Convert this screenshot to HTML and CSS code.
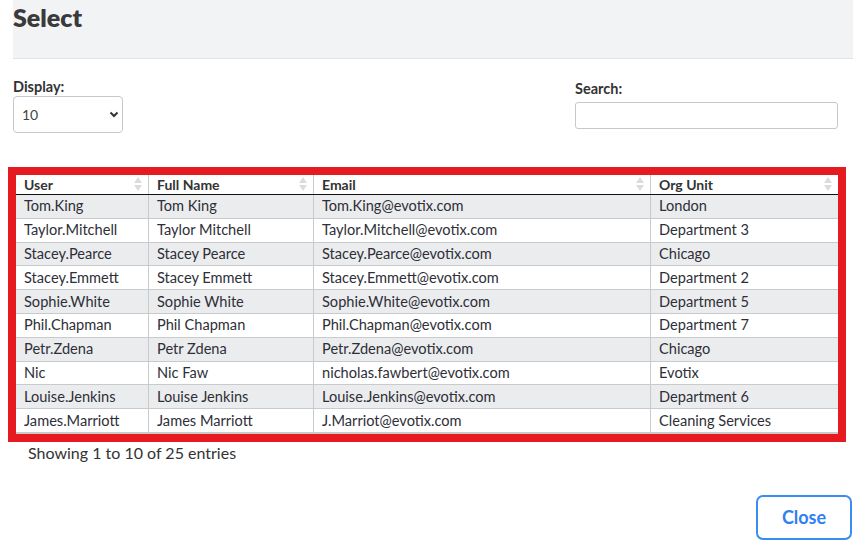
FILE: index.html
```html
<!DOCTYPE html>
<html lang="en">
<head>
    <meta charset="UTF-8">
    <meta name="viewport" content="width=device-width, initial-scale=1.0">
    <title>Select</title>
    <link rel="stylesheet" href="styles.css">
</head>
<body>

    <!-- Header -->
    <header class="modal-header">
        <h1>Select</h1>
    </header>

    <!-- Controls -->
    <section class="controls">
        <div class="display">
            <label for="display">Display:</label>
            <div class="select-wrap">
                <select id="display">
                    <option>10</option>
                    <option>25</option>
                    <option>50</option>
                </select>
                <svg class="chevron" width="10" height="7" viewBox="0 0 10 7">
                    <path d="M1.5 1.5 L5 5 L8.5 1.5" fill="none" stroke="#333" stroke-width="2"/>
                </svg>
            </div>
        </div>
        <div class="search">
            <label for="search">Search:</label>
            <input type="text" id="search">
        </div>
    </section>

    <!-- Users table -->
    <div class="table-frame">
        <table class="users">
            <thead>
                <tr>
                    <th class="col-user">User</th>
                    <th class="col-name">Full Name</th>
                    <th class="col-email">Email</th>
                    <th class="col-org">Org Unit</th>
                </tr>
            </thead>
            <tbody>
                <tr><td>Tom.King</td><td>Tom King</td><td>Tom.King@evotix.com</td><td>London</td></tr>
                <tr><td>Taylor.Mitchell</td><td>Taylor Mitchell</td><td>Taylor.Mitchell@evotix.com</td><td>Department 3</td></tr>
                <tr><td>Stacey.Pearce</td><td>Stacey Pearce</td><td>Stacey.Pearce@evotix.com</td><td>Chicago</td></tr>
                <tr><td>Stacey.Emmett</td><td>Stacey Emmett</td><td>Stacey.Emmett@evotix.com</td><td>Department 2</td></tr>
                <tr><td>Sophie.White</td><td>Sophie White</td><td>Sophie.White@evotix.com</td><td>Department 5</td></tr>
                <tr><td>Phil.Chapman</td><td>Phil Chapman</td><td>Phil.Chapman@evotix.com</td><td>Department 7</td></tr>
                <tr><td>Petr.Zdena</td><td>Petr Zdena</td><td>Petr.Zdena@evotix.com</td><td>Chicago</td></tr>
                <tr><td>Nic</td><td>Nic Faw</td><td>nicholas.fawbert@evotix.com</td><td>Evotix</td></tr>
                <tr><td>Louise.Jenkins</td><td>Louise Jenkins</td><td>Louise.Jenkins@evotix.com</td><td>Department 6</td></tr>
                <tr><td>James.Marriott</td><td>James Marriott</td><td>J.Marriot@evotix.com</td><td>Cleaning Services</td></tr>
            </tbody>
        </table>
    </div>

    <p class="info">Showing 1 to 10 of 25 entries</p>

    <!-- Footer -->
    <footer class="modal-footer">
        <button class="close-btn">Close</button>
    </footer>

</body>
</html>
```

FILE: styles.css
```css
body {
    font-family: Lato, "Noto Sans", sans-serif;
    margin: 0;
    padding: 0;
    background: #fff;
    color: #2e2f38;
}

/* Header */
.modal-header {
    margin-left: 13px;
    width: 840px;
    height: 58px;
    background: #f2f3f5;
    border-bottom: 1px solid #e1e3e6;
}

.modal-header h1 {
    margin: 0;
    padding-top: 3px;
    font-size: 25px;
    line-height: 28px;
    font-weight: 800;
    color: #3a3a3a;
}

/* Controls */
.controls {
    display: flex;
    justify-content: space-between;
    padding: 0 19px 0 13px;
}

.controls label {
    display: block;
    font-size: 14.5px;
    font-weight: 700;
    color: #333;
}

.display {
    margin-top: 19px;
}

.display label {
    margin-bottom: 1px;
}

.select-wrap {
    position: relative;
    width: 110px;
}

.select-wrap select {
    appearance: none;
    -webkit-appearance: none;
    width: 110px;
    height: 37px;
    padding: 0 8px;
    border: 1px solid #c6c8cb;
    border-radius: 4px;
    background: #fff;
    font-family: inherit;
    font-size: 14px;
    color: #444;
}

.chevron {
    position: absolute;
    right: 4px;
    top: 15px;
}

.search {
    margin-top: 21px;
}

.search label {
    margin-bottom: 5px;
}

.search input {
    display: block;
    width: 263px;
    height: 27px;
    box-sizing: border-box;
    border: 1px solid #c6c8cb;
    border-radius: 3px;
}

/* Table */
.table-frame {
    margin: 34px 0 0 8px;
    width: 822px;
    border: 8px solid #e51b1f;
}

.users {
    width: 100%;
    border-collapse: collapse;
    font-size: 14.6px;
    border-bottom: 2px solid #c8cacc;
}

.users th,
.users td {
    text-align: left;
    padding: 0 8px;
    line-height: 18px;
    border-left: 1px solid #c8cacc;
}

.users th:first-child,
.users td:first-child {
    border-left: none;
}

.users th {
    position: relative;
    height: 19px;
    font-size: 14px;
    font-weight: 700;
    color: #333;
    border-bottom: 1px solid #111;
}

/* sort arrows */
.users th::before,
.users th::after {
    content: "";
    position: absolute;
    right: 6px;
    border-left: 4px solid transparent;
    border-right: 4px solid transparent;
}

.users th::before {
    top: 2px;
    border-bottom: 6px solid #dcdcdc;
}

.users th::after {
    top: 10px;
    border-top: 6px solid #dcdcdc;
}

.users td {
    height: 22.8px;
    border-top: 1px solid #c8cacc;
    color: #2e2f38;
}

.users tbody tr:first-child td {
    border-top: none;
}

.users tbody tr:nth-child(odd) {
    background: #ebeced;
}

.col-user { width: 116px; }
.col-name { width: 148px; }
.col-email { width: 320px; }

.info {
    margin: 1px 0 0 28px;
    font-size: 16px;
    color: #333;
}

/* Footer */
.modal-footer {
    display: flex;
    justify-content: flex-end;
    padding: 33px 5px 0 0;
}

.close-btn {
    width: 96px;
    height: 45px;
    background: #fff;
    border: 2px solid #3b8cf0;
    border-radius: 7px;
    color: #2f80f2;
    font-family: inherit;
    font-size: 18px;
    font-weight: 700;
    cursor: pointer;
}
```
